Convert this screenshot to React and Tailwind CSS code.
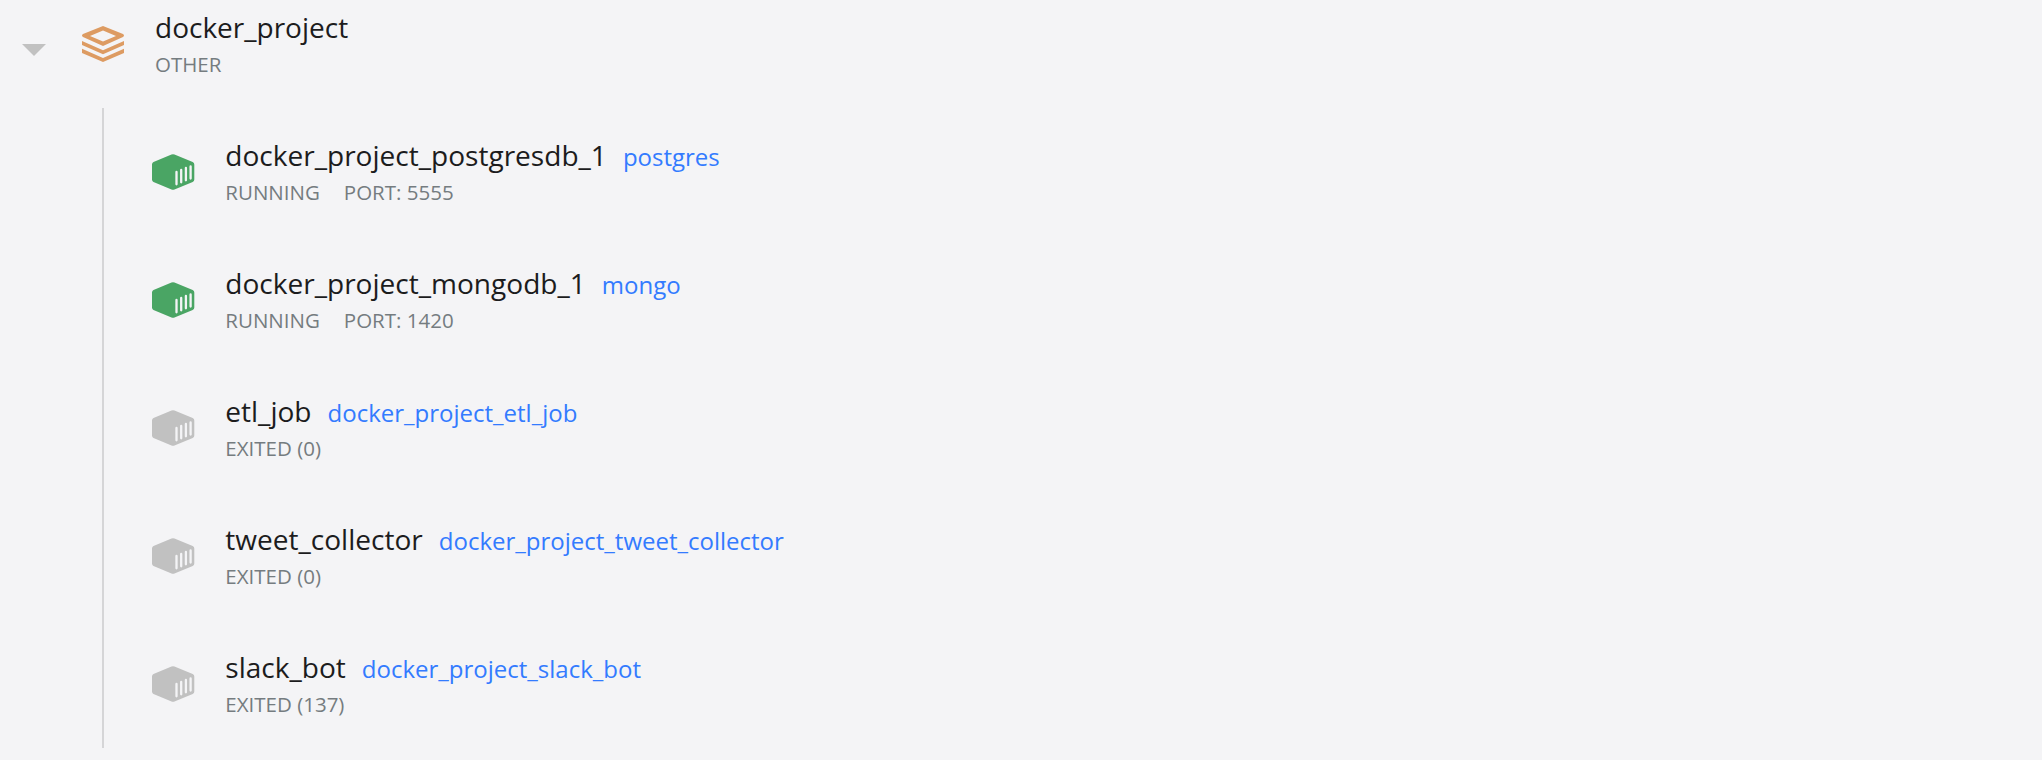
const containers = [
  { name: 'docker_project_postgresdb_1', image: 'postgres', running: true, status: ['RUNNING', 'PORT: 5555'] },
  { name: 'docker_project_mongodb_1', image: 'mongo', running: true, status: ['RUNNING', 'PORT: 1420'] },
  { name: 'etl_job', image: 'docker_project_etl_job', status: ['EXITED (0)'] },
  { name: 'tweet_collector', image: 'docker_project_tweet_collector', status: ['EXITED (0)'] },
  { name: 'slack_bot', image: 'docker_project_slack_bot', status: ['EXITED (137)'] },
];

function StackIcon() {
  return (
    <svg className="h-9 w-[42px]" viewBox="0 0 42 36">
      <path fill="#dd9b62" fillRule="evenodd" d="M21 0 41 8Q43 9.3 41 11L21 20 1 11Q-1 9.3 1 8ZM21 4.500 8 10 21 15.500 34 10Z" />
      <path fill="#dd9b62" d="M0 15 21 24.200 42 15V19L21 28.300 0 19ZM0 22.700 21 32 42 22.700V27L21 36 0 27Z" />
    </svg>
  );
}

function ContainerIcon({ running }) {
  return (
    <svg className={`h-9 w-[43px] ${running ? 'text-[#4aa564]' : 'text-[#c1c1c1]'}`} viewBox="0 0 43 36">
      <path fill="currentColor" d="M19.500 .6Q21-.3 22.500 .6L40.700 8Q42.300 8.700 42.300 10.500V25.500Q42.300 27.300 40.700 28L22.500 35.400Q21 36.300 19.500 35.400L1.500 28Q0 27.300 0 25.500V10.500Q0 8.700 1.500 8Z" />
      <path stroke="#f4f4f6" strokeWidth="2.300" strokeLinecap="round" d="M24.500 18V30.300M29.200 16V28.300M33.900 14V26.300M38.600 12.500V24.500" />
    </svg>
  );
}

export default function App() {
  return (
    <main className="h-[760px] overflow-hidden bg-[#f4f4f6] font-['Open_Sans',sans-serif] text-[#1c1c1d]">
      <header className="flex h-[108px] pl-[22px]">
        <svg className="mt-11 h-3 w-6" viewBox="0 0 24 12"><path fill="#c1c1c1" d="M0 0H24L12 12Z" /></svg>
        <div className="mt-[26px] ml-[36px]"><StackIcon /></div>
        <div className="ml-[31px] pt-[7px]">
          <h1 className="text-[28px] leading-[40px]">docker_project</h1>
          <p className="text-[20.500px] leading-[34px] text-[#757c80]">OTHER</p>
        </div>
      </header>
      <ul className="ml-[102px] h-[640px] border-l-2 border-[#d5d5d7]">
        {containers.map((c) => (
          <li key={c.name} className="flex h-32 pl-12">
            <div className="mt-[46px]"><ContainerIcon running={c.running} /></div>
            <div className="ml-[30.300px] pt-[27px]">
              <div className="flex h-10 items-baseline gap-4 leading-[40px]">
                <span className="text-[28.050px]">{c.name}</span>
                <a className="text-[24px] text-[#337bff]">{c.image}</a>
              </div>
              <div className="flex gap-6 text-[20.500px] leading-[34px] text-[#757c80]">
                {c.status.map((s) => <span key={s}>{s}</span>)}
              </div>
            </div>
          </li>
        ))}
      </ul>
    </main>
  );
}
